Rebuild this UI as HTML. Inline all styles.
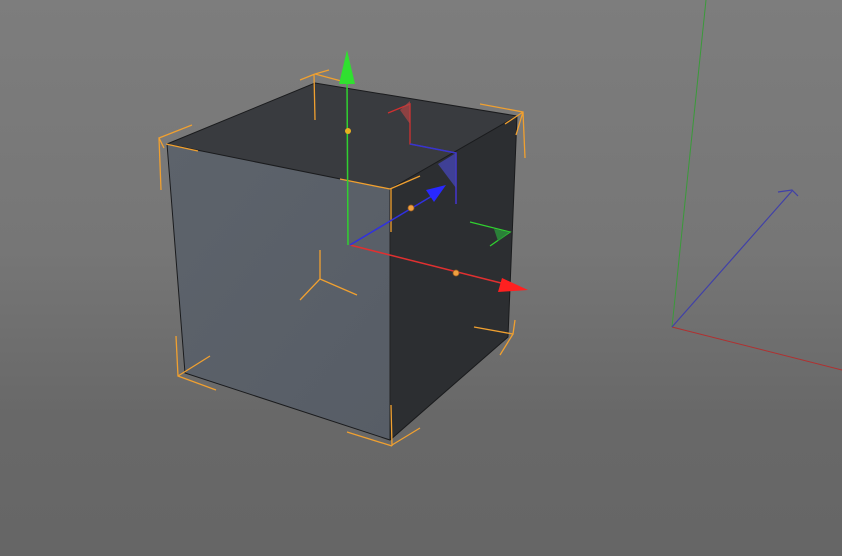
<!DOCTYPE html>
<html><head><style>
html,body{margin:0;padding:0;width:842px;height:556px;overflow:hidden}
body{background:linear-gradient(#7d7d7d 0%,#767676 45%,#686868 75%,#666 100%)}
svg{position:absolute;left:0;top:0}
</style></head><body>
<svg width="842" height="556" viewBox="0 0 842 556">
<defs>
<linearGradient id="lf" x1="0" y1="0" x2="1" y2="1"><stop offset="0" stop-color="#5d636b"/><stop offset="1" stop-color="#575d66"/></linearGradient>
</defs>
<!-- world axes -->
<line x1="706" y1="0" x2="672" y2="327" stroke="#3a9a3a" stroke-width="1"/>
<line x1="672" y1="327" x2="842" y2="370" stroke="#b03030" stroke-width="1"/>
<line x1="672" y1="327" x2="792" y2="191" stroke="#4040a8" stroke-width="1.2"/>
<path d="M778 192 L792 190 L798 196" fill="none" stroke="#4040a8" stroke-width="1.2"/>
<!-- cube -->
<polygon points="167,144 315,83 517,116 390,189" fill="#393b3f"/>
<polygon points="390,189 517,116 508,337 390,440" fill="#2c2e31"/>
<polygon points="167,144 390,189 390,440 185,373" fill="url(#lf)"/>
<polyline points="167,144 315,83 517,116 508,337 390,440 185,373 167,144 390,189 517,116" fill="none" stroke="#1a1b1d" stroke-width="1"/>
<line x1="390" y1="189" x2="390" y2="440" stroke="#222" stroke-width="1"/>
<!-- orange brackets -->
<g stroke="#f0a030" stroke-width="1.3" fill="none">
<path d="M164 148 L159 138 L192 125 M159 138 L161 190 M166 144 L198 151"/>
<path d="M315 74 L345 82 M315 74 L329 70 M314 74 L315 120 M315 74 L300 80"/>
<path d="M480 104 L523 112 L516 135 M523 112 L525 158 M523 112 L505 124"/>
<path d="M390 189 L420 176 M390 189 L340 179 M391 188 L391 232"/>
<path d="M176 336 L178 376 L216 390 M178 376 L210 356"/>
<path d="M392 445 L420 428 M392 446 L347 432 M392 446 L391 405"/>
<path d="M515 320 L513 334 L474 327 M513 334 L500 355"/>
<path d="M320 250 L320 279 L300 300 M320 279 L357 295"/>
</g>
<!-- gizmo -->
<line x1="348" y1="245" x2="347" y2="80" stroke="#30d030" stroke-width="1.5"/>
<polygon points="347,50 339,84 355,84" fill="#30e030"/>
<line x1="350" y1="245" x2="505" y2="284" stroke="#e03030" stroke-width="1.5"/>
<polygon points="528,290 502,278 498,292" fill="#ff2020"/>
<line x1="350" y1="245" x2="432" y2="196" stroke="#3030e0" stroke-width="1.5"/>
<polygon points="446,185 426,190 434,202" fill="#2828ff"/>
<circle cx="348" cy="131" r="3" fill="#e8b020"/>
<circle cx="411" cy="208" r="3" fill="#f0a040" stroke="#a06020" stroke-width="0.8"/>
<circle cx="456" cy="273" r="3" fill="#f0a040" stroke="#a06020" stroke-width="0.8"/>
<!-- plane handles -->
<path d="M388 113 L410 104 L410 144 L456 153 L456 204" fill="none" stroke="#d03030" stroke-width="1.3"/>
<path d="M410 144 L456 153 L456 204" fill="none" stroke="#3535d0" stroke-width="1.5"/>
<polygon points="400,110 410,101 410,124" fill="#b04545" opacity="0.7"/>
<polygon points="438,164 456,153 456,188" fill="#4545b0" opacity="0.8"/>
<path d="M470 222 L510 232 L490 246" fill="none" stroke="#30d030" stroke-width="1.3"/>
<polygon points="494,229 510,232 498,241" fill="#2a8a3a" opacity="0.9"/>
</svg>
</body></html>
